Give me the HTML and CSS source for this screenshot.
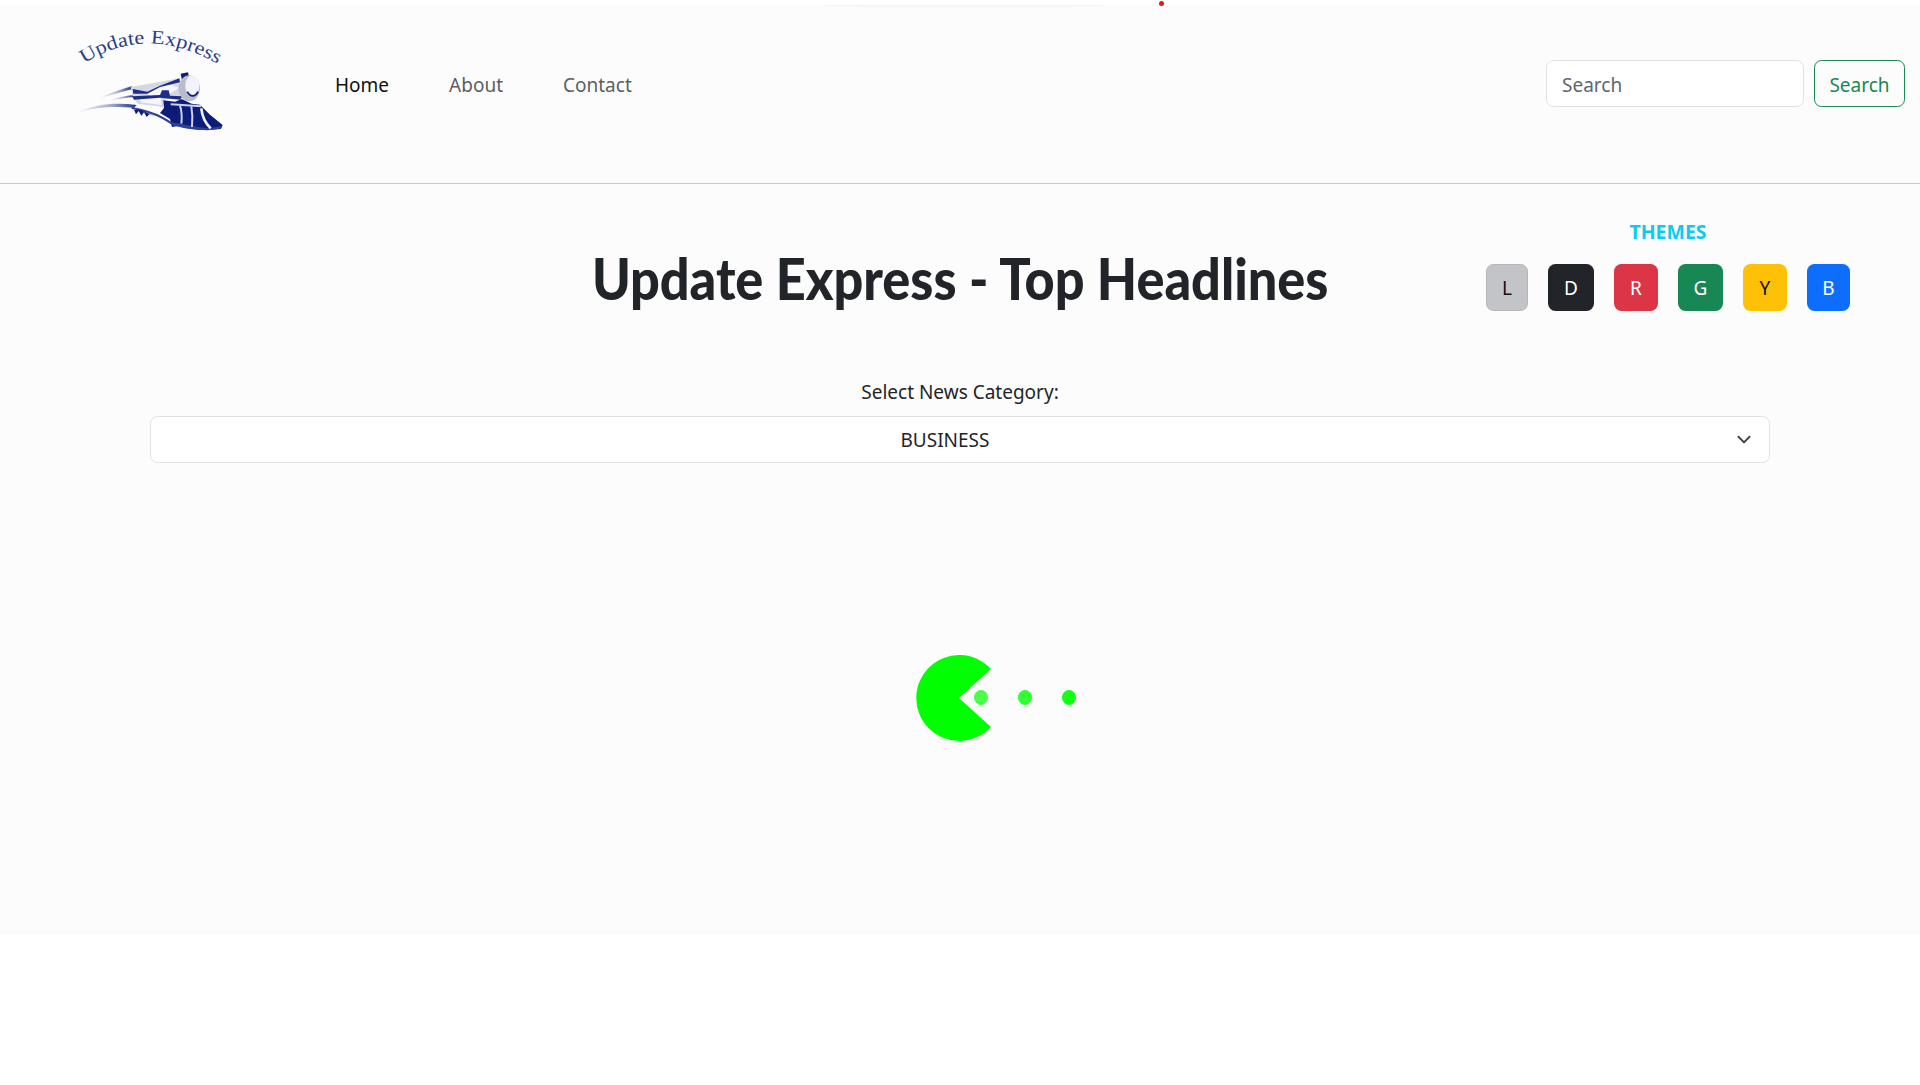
FILE: index.html
```html
<!DOCTYPE html>
<html lang="en">
<head>
<meta charset="utf-8">
<title>Update Express - Top Headlines</title>
<link rel="stylesheet" href="styles.css">
</head>
<body>
<span class="progress-shadow"></span>
<span class="progress-dot"></span>
<div class="page">
  <header class="navbar">
    <a class="brand" href="#" aria-label="Update Express">
      <svg class="logo" viewBox="0 0 540 390" role="img">
        <defs>
          <path id="logo-arc" d="M72 146 Q262 22 482 152"/>
          <linearGradient id="fade" x1="0" x2="1" y1="0" y2="0">
            <stop offset="0" stop-color="#c8cde0" stop-opacity=".25"/>
            <stop offset=".6" stop-color="#9aa3c8"/>
            <stop offset="1" stop-color="#1d2f85"/>
          </linearGradient>
          <filter id="soft" x="-5%" y="-5%" width="110%" height="110%">
            <feGaussianBlur stdDeviation="1.2"/>
          </filter>
        </defs>
        <text class="logo-text" textLength="425" lengthAdjust="spacingAndGlyphs"><textPath href="#logo-arc">Update Express</textPath></text>
        <g filter="url(#soft)" transform="translate(0 4)">
          <path fill="url(#fade)" d="M52 288 C110 262 170 258 230 266 L222 274 C160 270 110 272 52 288Z"/>
          <path fill="url(#fade)" d="M124 244 C150 230 185 218 216 210 L218 218 C190 226 155 236 124 244Z"/>
          <path fill="url(#fade)" d="M150 252 C170 244 195 238 222 236 L222 242 C200 244 175 248 150 252Z"/>
          <path fill="#d5d8e4" d="M212 212 L358 186 L372 240 L312 250 L310 272 L232 262 L218 240Z"/>
          <path fill="#f6f6fb" d="M262 226 L330 204 L356 214 L330 232 L268 240Z"/>
          <path fill="#f6f6fb" d="M238 246 L302 242 L304 266 L244 258Z"/>
          <path fill="#1d2f85" d="M218 218 L262 226 L300 208 L358 186 L360 198 L300 212 L262 232 L220 232Z"/>
          <path fill="#1d2f85" d="M216 240 L300 236 L306 222 L326 222 L330 238 L368 240 L360 250 L300 244 L222 250Z"/>
          <path fill="#0b1f7a" d="M362 172 L384 168 L388 186 L366 192Z"/>
          <ellipse cx="388" cy="216" rx="32" ry="39" fill="#b9bdca"/>
          <ellipse cx="397" cy="208" rx="21" ry="31" fill="#f2f3fa"/>
          <path fill="none" stroke="#0b1f7a" stroke-width="5" d="M382 226 C392 246 408 240 414 226"/>
          <path fill="#0b1f7a" d="M310 252 L345 256 L365 248 L395 262 L420 265 L450 295 L488 326 L482 338 L440 342 L400 338 L360 328 L336 332 L330 308 L300 290 L312 275Z"/>
          <path fill="#2f3f92" d="M215 272 C260 280 300 292 335 318 L400 330 L440 336 L486 330 L484 336 C440 346 380 340 336 326 C300 300 260 286 215 278Z"/>
          <path fill="#0b1f7a" d="M222 280 L228 294 L236 284 L244 298 L252 288 L260 302 L268 294 L285 300 L240 280Z"/>
          <path fill="none" stroke="#cdd2e4" stroke-width="6" d="M332 264 L424 270 M360 268 C366 286 366 304 364 322 M394 270 C398 292 398 312 396 332"/>
          <path fill="none" stroke="#f2f3fa" stroke-width="8" d="M424 276 C426 300 436 320 452 336"/>
        </g>
      </svg>
    </a>
    <nav class="nav-links">
      <a class="nav-link active" href="#">Home</a>
      <a class="nav-link" href="#">About</a>
      <a class="nav-link" href="#">Contact</a>
    </nav>
    <form class="search">
      <input class="search-input" type="search" placeholder="Search">
      <button class="btn btn-search" type="button">Search</button>
    </form>
  </header>
  <main class="content">
    <section class="title-row">
      <h1 class="title">Update Express - Top Headlines</h1>
      <aside class="themes">
        <h2 class="themes-title">THEMES</h2>
        <div class="theme-buttons">
          <button class="btn theme t-light" type="button">L</button>
          <button class="btn theme t-dark" type="button">D</button>
          <button class="btn theme t-red" type="button">R</button>
          <button class="btn theme t-green" type="button">G</button>
          <button class="btn theme t-yellow" type="button">Y</button>
          <button class="btn theme t-blue" type="button">B</button>
        </div>
      </aside>
    </section>
    <section class="category">
      <label class="category-label" for="category">Select News Category:</label>
      <select class="category-select" id="category">
        <option>BUSINESS</option>
      </select>
    </section>
    <div class="loader" aria-label="Loading">
      <svg class="pacman" viewBox="0 0 86 86"><path d="M75 14 A43 43 0 1 0 75 72 L43 43 Z"/></svg>
      <span class="pellet p1"></span>
      <span class="pellet p2"></span>
      <span class="pellet p3"></span>
    </div>
  </main>
</div>
</body>
</html>
```
FILE: styles.css
```css
* { box-sizing: border-box; }
html, body { margin: 0; padding: 0; }
body {
  background: #fff;
  color: #212529;
  font-family: "Noto Sans", "Open Sans", sans-serif;
  font-size: 19px;
  height: 1085px;
  overflow: hidden;
  padding-top: 5px;
}
.progress-shadow {
  position: absolute;
  left: 825px;
  top: 5px;
  width: 280px;
  height: 3px;
  background: linear-gradient(#f4f4f4, #fcfcfc);
  border-radius: 0 0 50% 50%;
}
.progress-dot {
  position: absolute;
  left: 1159px;
  top: 1px;
  width: 5px;
  height: 5px;
  border-radius: 50%;
  background: #e8161c;
}
.page { background: #fcfcfc; height: 930px; }
.navbar {
  display: flex;
  align-items: flex-start;
  height: 179px;
  border-bottom: 1px solid #c9c9ca;
}
.brand { display: block; width: 180px; height: 130px; margin: 10px 0 0 60px; }
.logo { display: block; width: 180px; height: 130px; }
.logo-text { font-family: "Liberation Serif", serif; font-size: 58px; fill: #2b3f86; }
.nav-links { display: flex; gap: 60px; margin: 56px 0 0 95px; }
.nav-link { color: #5c5f62; text-decoration: none; line-height: 48px; font-size: 19px; }
.nav-link.active { color: #111; }
.search { display: flex; gap: 10px; margin: 55px 15px 0 auto; }
.search-input {
  width: 258px;
  height: 47px;
  padding: 2px 15px 0;
  font: inherit;
  color: #212529;
  background: #fff;
  border: 1px solid #dee2e6;
  border-radius: 7.5px;
  outline: 0;
}
.search-input::placeholder { color: #60666c; opacity: 1; }
.btn {
  height: 47px;
  font: inherit;
  border: 1px solid transparent;
  border-radius: 7.5px;
  padding: 0;
  background: transparent;
}
.btn-search { width: 91px; color: #198754; border-color: #198754; padding-top: 2px; }
.content { display: block; }
.title-row {
  display: grid;
  grid-template-columns: 1fr auto 1fr;
  align-items: start;
  height: 193px;
}
.title {
  grid-column: 2;
  margin: 59px 0 0;
  font-family: "Lato", "Liberation Sans", sans-serif;
  font-weight: 900;
  font-size: 58px;
  line-height: 70px;
  white-space: nowrap;
  transform: scaleX(.9);
}
.themes {
  grid-column: 3;
  justify-self: end;
  margin: 35px 70px 0 0;
  display: flex;
  flex-direction: column;
  align-items: center;
}
.themes-title {
  margin: 0;
  font-size: 19.5px;
  line-height: 26px;
  font-weight: 700;
  color: #0dcaf0;
}
.theme-buttons { display: flex; gap: 20px; margin-top: 19px; }
.theme { width: 44px; color: #fff; }
.t-light { width: 42px; background: #c3c4c7; border-color: #b5b6b9; color: #111; }
.t-dark { width: 46px; background: #212529; }
.t-red { background: #dc3545; }
.t-green { width: 45px; background: #198754; }
.t-yellow { background: #ffc107; color: #111; }
.t-blue { width: 43px; background: #0d6efd; }
.category { padding: 0 150px; text-align: center; }
.category-label { display: block; line-height: 30px; margin-bottom: 9px; }
.category-select {
  display: block;
  width: 100%;
  height: 47px;
  padding: 0 45px 0 15px;
  font: inherit;
  color: #212529;
  text-align: center;
  background: #fff url("data:image/svg+xml,%3csvg xmlns='http://www.w3.org/2000/svg' viewBox='0 0 16 16'%3e%3cpath fill='none' stroke='%23343a40' stroke-linecap='round' stroke-linejoin='round' stroke-width='2' d='m2 5 6 6 6-6'/%3e%3c/svg%3e") no-repeat right 15px center / 20px 15px;
  border: 1px solid #dee2e6;
  border-radius: 7.5px;
  appearance: none;
}
.loader {
  display: flex;
  align-items: center;
  margin: 192px 0 0 915.5px;
  height: 86px;
  position: relative;
}
.pacman { width: 86px; height: 86px; fill: #00ff00; flex: none; }
.pellet {
  width: 14px;
  height: 15px;
  border-radius: 50%;
  background: #00ff00;
  flex: none;
  margin: -1px 0 0 30px;
}
.p1 { margin-left: -27.5px; opacity: .7; }
.p2 { opacity: .82; }
.p3 { opacity: .93; }
```
